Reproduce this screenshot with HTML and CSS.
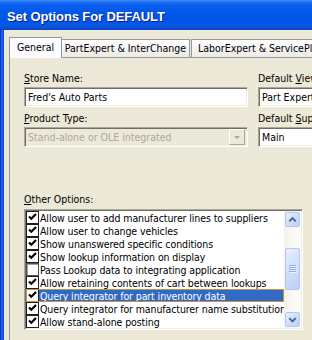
FILE: index.html
```html
<!DOCTYPE html>
<html>
<head>
<meta charset="utf-8">
<link rel="stylesheet" href="styles.css">
</head>
<body>
<div class="window">
  <div class="titlebar"><span class="title">Set Options For DEFAULT</span></div>
  <div class="client">
    <div class="tabs">
      <div class="tab sel">General</div>
      <div class="tab t2">PartExpert &amp; InterChange</div>
      <div class="tab t3">LaborExpert &amp; ServicePlus</div>
    </div>
    <div class="panel">
      <div class="cols">
        <div class="col col-left">
          <div class="label"><u>S</u>tore Name:</div>
          <div class="field">Fred's Auto Parts</div>
          <div class="label"><u>P</u>roduct Type:</div>
          <div class="field disabled combo">
            <span class="val">Stand-alone or OLE integrated</span>
            <span class="dd"><svg width="14" height="14" viewBox="0 0 14 14"><path d="M4 6 L10 6 L7 9 Z" fill="#ACA899"/></svg></span>
          </div>
        </div>
        <div class="col col-right">
          <div class="label">Default <u>V</u>iew:</div>
          <div class="field">Part Expert</div>
          <div class="label">Default <u>S</u>upplier:</div>
          <div class="field">Main</div>
        </div>
      </div>
      <div class="label other"><u>O</u>ther Options:</div>
      <div class="listbox">
        <div class="items">
          <div class="item"><span class="cb"><svg width="11" height="11" viewBox="0 0 11 11"><path d="M2 4.5 L4.3 6.8 L9 2" stroke="#000" stroke-width="2.2" fill="none"/></svg></span><span class="txt">Allow user to add manufacturer lines to suppliers</span></div>
          <div class="item"><span class="cb"><svg width="11" height="11" viewBox="0 0 11 11"><path d="M2 4.5 L4.3 6.8 L9 2" stroke="#000" stroke-width="2.2" fill="none"/></svg></span><span class="txt">Allow user to change vehicles</span></div>
          <div class="item"><span class="cb"><svg width="11" height="11" viewBox="0 0 11 11"><path d="M2 4.5 L4.3 6.8 L9 2" stroke="#000" stroke-width="2.2" fill="none"/></svg></span><span class="txt">Show unanswered specific conditions</span></div>
          <div class="item"><span class="cb"><svg width="11" height="11" viewBox="0 0 11 11"><path d="M2 4.5 L4.3 6.8 L9 2" stroke="#000" stroke-width="2.2" fill="none"/></svg></span><span class="txt">Show lookup information on display</span></div>
          <div class="item"><span class="cb off"><svg width="11" height="11" viewBox="0 0 11 11"></svg></span><span class="txt">Pass Lookup data to integrating application</span></div>
          <div class="item"><span class="cb"><svg width="11" height="11" viewBox="0 0 11 11"><path d="M2 4.5 L4.3 6.8 L9 2" stroke="#000" stroke-width="2.2" fill="none"/></svg></span><span class="txt">Allow retaining contents of cart between lookups</span></div>
          <div class="item selected"><span class="cb"><svg width="11" height="11" viewBox="0 0 11 11"><path d="M2 4.5 L4.3 6.8 L9 2" stroke="#000" stroke-width="2.2" fill="none"/></svg></span><span class="txt">Query integrator for part inventory data</span></div>
          <div class="item"><span class="cb"><svg width="11" height="11" viewBox="0 0 11 11"><path d="M2 4.5 L4.3 6.8 L9 2" stroke="#000" stroke-width="2.2" fill="none"/></svg></span><span class="txt">Query integrator for manufacturer name substitutions</span></div>
          <div class="item"><span class="cb"><svg width="11" height="11" viewBox="0 0 11 11"><path d="M2 4.5 L4.3 6.8 L9 2" stroke="#000" stroke-width="2.2" fill="none"/></svg></span><span class="txt">Allow stand-alone posting</span></div>
        </div>
        <div class="vscroll">
          <div class="sbtn up"><svg width="14" height="13" viewBox="0 0 14 13"><path d="M3.5 8.5 L7 5 L10.5 8.5" stroke="#4D6185" stroke-width="2" fill="none"/></svg></div>
          <div class="thumb"><svg width="8" height="8" viewBox="0 0 8 8"><path d="M0 0.5 H7 M0 2.5 H7 M0 4.5 H7 M0 6.5 H7" stroke="#8CA8E8" stroke-width="1"/><path d="M1 1.5 H8 M1 3.5 H8 M1 5.5 H8 M1 7.5 H8" stroke="#EEF4FF" stroke-width="1"/></svg></div>
          <div class="sbtn down"><svg width="14" height="13" viewBox="0 0 14 13"><path d="M3.5 5 L7 8.5 L10.5 5" stroke="#4D6185" stroke-width="2" fill="none"/></svg></div>
        </div>
      </div>
    </div>
  </div>
</div>
</body>
</html>
```

FILE: styles.css
```css
html, body {
  margin: 0;
  padding: 0;
}
body {
  width: 312px;
  height: 340px;
  overflow: hidden;
  background: #ECE9D8;
  font-family: "DejaVu Sans Condensed", "DejaVu Sans", "Liberation Sans", sans-serif;
  font-stretch: condensed;
  font-size: 10.5px;
  color: #000;
}
.window {
  width: 312px;
  height: 340px;
  display: flex;
  flex-direction: column;
  overflow: hidden;
  background: linear-gradient(to right, #0831C8 0, #0831C8 1px, #1560EC 1px, #1560EC 3px, #0A4CDD 3px, #0A4CDD 4px, #ECE9D8 4px);
}
.titlebar {
  height: 30px;
  flex: none;
  display: flex;
  align-items: center;
  padding: 2px 0 0 7px;
  box-sizing: border-box;
  background: linear-gradient(to bottom, #3F8EF6 0, #1F6EF3 2px, #0A5EEE 5px, #0058EA 12px, #0055E5 20px, #0758E6 25px, #0B4FD8 28px, #0842C6 30px);
}
.title {
  font-family: "Liberation Sans", Arial, sans-serif;
  font-stretch: normal;
  font-weight: bold;
  font-size: 13px;
  letter-spacing: -0.1px;
  color: #fff;
  text-shadow: 1px 1px 0 #0A1A8A;
  white-space: nowrap;
}
.client {
  flex: 1;
  padding: 7px 0 0 9px;
  display: flex;
  flex-direction: column;
  min-width: 0;
}
.tabs {
  display: flex;
  align-items: flex-end;
  height: 20px;
  flex: none;
  position: relative;
  z-index: 1;
}
.tab {
  height: 18px;
  box-sizing: border-box;
  border: 1px solid #919B9C;
  border-bottom: none;
  background: linear-gradient(to bottom, #FFFFFF, #F3F2EE 60%, #ECEBE5);
  display: flex;
  align-items: center;
  justify-content: center;
  white-space: nowrap;
  overflow: hidden;
  flex: none;
  padding-bottom: 1px;
}
.tab.sel {
  width: 53px;
  height: 21px;
  margin-bottom: -1px;
  background: #FCFCFE;
  border-color: #919B9C;
  padding-bottom: 2px;
}
.tab.t2 {
  width: 128px;
  border-left: none;
}
.tab.t3 {
  width: 140px;
  margin-left: 1px;
  justify-content: flex-start;
  padding-left: 6px;
}
.panel {
  flex: 1;
  border-top: 1px solid #919B9C;
  border-left: 1px solid #919B9C;
  padding: 13px 0 0 14px;
  width: 400px;
  background: #ECE9D8;
}
.cols {
  display: flex;
  gap: 10px;
}
.col-left {
  width: 224px;
  flex: none;
}
.col-right {
  width: 150px;
  flex: none;
}
.label {
  height: 14px;
  line-height: 14px;
  margin-bottom: 2px;
  white-space: nowrap;
}
.label u {
  text-decoration-thickness: 1px;
  text-underline-offset: 1px;
}
.field {
  height: 20px;
  box-sizing: border-box;
  background: #fff;
  border-style: solid;
  border-width: 1px;
  border-color: #ACA899 #FFFFFF #FFFFFF #ACA899;
  box-shadow: inset 1px 1px 0 #716F64, inset -1px -1px 0 #F1EFE2;
  padding: 0 0 0 3px;
  line-height: 18px;
  margin-bottom: 4px;
  white-space: nowrap;
  overflow: hidden;
}
.field.disabled {
  background: #ECE9D8;
  color: #ACA899;
}
.combo {
  display: flex;
  align-items: center;
  padding-right: 2px;
}
.combo .val {
  flex: 1;
  overflow: hidden;
}
.dd {
  width: 16px;
  height: 16px;
  box-sizing: border-box;
  flex: none;
  background: #ECE9D8;
  border-style: solid;
  border-width: 1px;
  border-color: #FFFFFF #ACA899 #ACA899 #FFFFFF;
  display: flex;
  align-items: center;
  justify-content: center;
}
.other {
  margin-top: 41px;
  margin-bottom: 3px;
}
.listbox {
  width: 279px;
  height: 121px;
  box-sizing: border-box;
  border-style: solid;
  border-width: 1px;
  border-color: #ACA899 #FFFFFF #FFFFFF #ACA899;
  box-shadow: inset 1px 1px 0 #716F64, inset -1px -1px 0 #F1EFE2;
  padding: 1px;
  background: #fff;
  display: flex;
}
.items {
  flex: 1;
  min-width: 0;
}
.item {
  height: 13px;
  display: flex;
  align-items: center;
  white-space: nowrap;
  overflow: hidden;
  box-sizing: border-box;
  letter-spacing: -0.1px;
}
.item.selected {
  background: #316AC5;
  color: #fff;
  outline: 1px solid #C8923E;
  outline-offset: -1px;
}
.cb {
  width: 13px;
  height: 13px;
  box-sizing: border-box;
  border: 1px solid #1E1E1E;
  background: #fff;
  flex: none;
  display: flex;
  align-items: center;
  justify-content: center;
}
.cb.off {
  border: 1px solid #505050;
  box-shadow: inset 1px 1px 0 #A0A0A0;
}
.txt {
  padding-left: 1px;
}
.vscroll {
  width: 17px;
  flex: none;
  display: flex;
  flex-direction: column;
  background: linear-gradient(to right, #F3F1EC, #FEFEFB);
}
.sbtn, .thumb {
  width: 15px;
  margin-left: 1px;
  box-sizing: border-box;
  border: 1px solid #B4C8F4;
  border-radius: 2px;
  background: linear-gradient(135deg, #E8F0FF 0%, #CFDEFD 50%, #BCCFFA 100%);
  display: flex;
  align-items: center;
  justify-content: center;
}
.sbtn {
  height: 15px;
}
.sbtn.up {
  margin-top: 1px;
}
.sbtn.down {
  margin-top: auto;
  margin-bottom: 1px;
}
.thumb {
  height: 42px;
  margin-top: 21px;
}
```
